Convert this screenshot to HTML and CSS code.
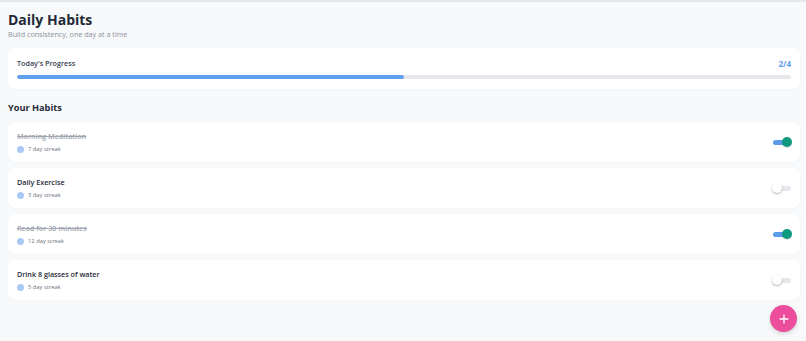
FILE: index.html
```html
<!DOCTYPE html>
<html lang="en">
<head>
<meta charset="utf-8">
<title>Daily Habits</title>
<link rel="stylesheet" href="styles.css">
</head>
<body>
<div class="app">
  <header class="header">
    <h1 class="title">Daily Habits</h1>
    <p class="subtitle">Build consistency, one day at a time</p>
  </header>

  <section class="card progress-card">
    <div class="progress-head">
      <span class="progress-label">Today's Progress</span>
      <span class="progress-count">2/4</span>
    </div>
    <div class="progress-track"><div class="progress-fill" style="width:50%"></div></div>
  </section>

  <h2 class="section-title">Your Habits</h2>

  <div class="habit-list">
    <div class="card habit done">
      <div class="habit-info">
        <div class="habit-name">Morning Meditation</div>
        <div class="habit-streak"><span class="dot"></span>7 day streak</div>
      </div>
      <span class="switch on"><span class="track"></span><span class="thumb"></span></span>
    </div>
    <div class="card habit">
      <div class="habit-info">
        <div class="habit-name">Daily Exercise</div>
        <div class="habit-streak"><span class="dot"></span>3 day streak</div>
      </div>
      <span class="switch"><span class="track"></span><span class="thumb"></span></span>
    </div>
    <div class="card habit done">
      <div class="habit-info">
        <div class="habit-name">Read for 30 minutes</div>
        <div class="habit-streak"><span class="dot"></span>12 day streak</div>
      </div>
      <span class="switch on"><span class="track"></span><span class="thumb"></span></span>
    </div>
    <div class="card habit">
      <div class="habit-info">
        <div class="habit-name">Drink 8 glasses of water</div>
        <div class="habit-streak"><span class="dot"></span>5 day streak</div>
      </div>
      <span class="switch"><span class="track"></span><span class="thumb"></span></span>
    </div>
  </div>

  <button class="fab" aria-label="Add habit">
    <svg width="10" height="10" viewBox="0 0 10 10"><path d="M5 1v8M1 5h8" stroke="#fff" stroke-width="1.3" stroke-linecap="round"/></svg>
  </button>
</div>
</body>
</html>
```

FILE: styles.css
```css
* { box-sizing: border-box; }
html, body { margin: 0; padding: 0; }
body {
  background: #f8f9fb;
  font-family: "Open Sans", "Noto Sans", sans-serif;
  color: #1f2937;
  border-top: 2px solid #e5e7eb;
  height: 341px;
  overflow: hidden;
}
.app {
  padding: 9px 6px 0 8px;
  position: relative;
  height: 100%;
}
.header { margin-bottom: 9px; }
.title {
  margin: 0;
  font-size: 14px;
  font-weight: 700;
  line-height: 18px;
  color: #1f2937;
}
.subtitle {
  margin: 0;
  font-size: 7.2px;
  line-height: 10px;
  color: #8b929c;
}
.card {
  background: #fff;
  border-radius: 8px;
  box-shadow: 0 1px 2px rgba(0,0,0,0.02);
}
.progress-card {
  padding: 9px 9px 9px 9px;
  height: 41px;
}
.progress-head {
  display: flex;
  justify-content: space-between;
  align-items: center;
  height: 12px;
}
.progress-label {
  font-size: 7.2px;
  font-weight: 600;
  color: #374151;
}
.progress-count {
  font-size: 8px;
  font-weight: 700;
  color: #5b9be8;
}
.progress-track {
  margin-top: 6px;
  height: 4px;
  border-radius: 2px;
  background: #e5e7eb;
  overflow: hidden;
}
.progress-fill {
  height: 100%;
  background: #60a0ee;
  border-radius: 2px;
}
.section-title {
  margin: 12px 0 7px;
  font-size: 9.2px;
  font-weight: 700;
  line-height: 14px;
  color: #1f2937;
}
.habit-list {
  display: flex;
  flex-direction: column;
  gap: 6px;
}
.habit {
  height: 40px;
  display: flex;
  align-items: center;
  justify-content: space-between;
  padding: 0 8px 0 9px;
}
.habit-info { display: flex; flex-direction: column; gap: 4px; }
.habit-name {
  font-size: 7.2px;
  font-weight: 600;
  line-height: 10px;
  color: #1f2937;
}
.habit.done .habit-name {
  color: #a0a6b0;
  text-decoration: line-through;
}
.habit-streak {
  display: flex;
  align-items: center;
  font-size: 5.8px;
  line-height: 8px;
  color: #6b7280;
}
.dot {
  width: 7px;
  height: 7px;
  border-radius: 50%;
  background: #a9c9f4;
  margin-right: 4px;
}
.switch {
  position: relative;
  width: 20px;
  height: 10px;
  display: block;
}
.track {
  position: absolute;
  left: 1px;
  right: 1px;
  top: 2.5px;
  height: 5px;
  border-radius: 3px;
  background: #e5e7eb;
}
.switch.on .track { background: #5b9be8; }
.thumb {
  position: absolute;
  top: 0;
  left: 0;
  width: 10px;
  height: 10px;
  border-radius: 50%;
  background: #fff;
  box-shadow: 0 1px 2px rgba(0,0,0,0.3);
}
.switch.on .thumb {
  left: 10px;
  background: #0f9a7f;
  box-shadow: 0 1px 1px rgba(0,0,0,0.15);
}
.fab {
  position: absolute;
  right: 9px;
  top: 303px;
  width: 27px;
  height: 27px;
  border-radius: 50%;
  border: none;
  background: #ec4d9c;
  display: flex;
  align-items: center;
  justify-content: center;
  padding: 0;
  box-shadow: 0 2px 4px rgba(0,0,0,0.15);
}
```
